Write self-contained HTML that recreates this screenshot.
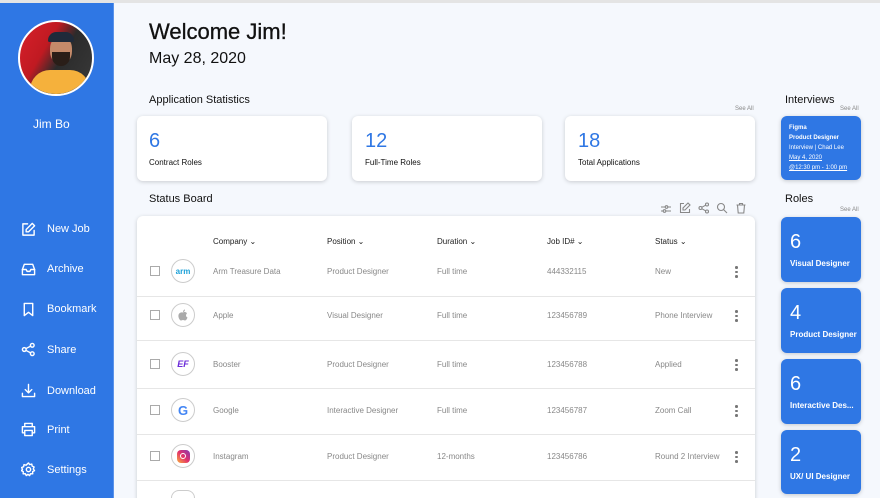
<!DOCTYPE html>
<html style="overflow:hidden;width:880px;height:498px"><head><meta charset="utf-8"><style>
*{margin:0;padding:0;box-sizing:border-box}
body{width:880px;height:498px;overflow:hidden;background:#f5f8fd;font-family:"Liberation Sans",sans-serif;position:relative;color:#111}
.a{position:absolute;white-space:nowrap}
.top{left:0;top:0;width:880px;height:3px;background:#e4e4e4}
.side{left:0;top:3px;width:114px;height:495px;background:#2f77e4;border-right:1px solid #5b93ea}
.nav{color:#fff;font-size:11px;left:47px}
.ic{left:21px;width:15px;height:15px}
.card{background:#fff;border-radius:6px;box-shadow:0 1px 4px rgba(0,0,0,.18)}
.num{color:#2f77e4;font-size:20px}
.lbl{font-size:8px;color:#111}
.h{font-size:11px;color:#111}
.see{font-size:6px;color:#888}
.th{font-size:8px;color:#222;top:237px}
.td{font-size:8px;color:#888}
.chk{width:10px;height:10px;border:1px solid #aaa;left:150px}
.logo{width:24px;height:24px;border:1px solid #ccc;border-radius:50%;left:171px;background:#fff;display:flex;align-items:center;justify-content:center}
.dots{left:735px;width:3px}
.dots i{display:block;width:2.5px;height:2.5px;background:#777;border-radius:50%;margin-bottom:2px}
.line{left:137px;width:618px;height:1px;background:#e6e6e6}
.rc{left:781px;width:80px;height:65px;background:#2f77e4;border-radius:6px;box-shadow:0 1px 4px rgba(0,0,0,.2);color:#fff}
.rc b{position:absolute;left:9px;top:14px;font-size:20px;font-weight:normal}
.rc span{position:absolute;left:9px;top:42px;font-size:8px;font-weight:bold}
svg.s{stroke:#fff;fill:none;stroke-width:1.5;stroke-linecap:round;stroke-linejoin:round}
svg.g{stroke:#888;fill:none;stroke-width:1.1}
</style></head><body>
<div class="a top"></div>
<div class="a side"></div>
<div class="a" style="left:18px;top:20px;width:76px;height:76px;border-radius:50%;border:2px solid #fff;background:linear-gradient(120deg,#d8202a 0%,#c01a22 35%,#2b2b2b 55%,#3a3a3a 100%);overflow:hidden">
<div style="position:absolute;left:30px;top:14px;width:22px;height:28px;border-radius:45%;background:#c48a6a"></div>
<div style="position:absolute;left:28px;top:10px;width:26px;height:10px;border-radius:10px 10px 2px 2px;background:#1f2a3a"></div>
<div style="position:absolute;left:32px;top:30px;width:18px;height:14px;border-radius:0 0 9px 9px;background:#2a1e18"></div>
<div style="position:absolute;left:10px;top:48px;width:60px;height:30px;border-radius:20px 20px 0 0;background:#f5b13c"></div>
</div>
<div class="a" style="left:33px;top:117px;color:#fff;font-size:12px">Jim Bo</div>

<svg class="a ic s" style="top:222px" viewBox="0 0 16 16"><path d="M7 2H2v12h12V9"/><path d="M12 1.5l2.5 2.5L8 10.5H5.5V8z"/></svg>
<div class="a nav" style="top:223px">New Job</div>
<svg class="a ic s" style="top:262px" viewBox="0 0 16 16"><path d="M1.5 8l2-5.5h9l2 5.5v5.5h-13z"/><path d="M1.5 8h4l1 2h3l1-2h4"/></svg>
<div class="a nav" style="top:263px">Archive</div>
<svg class="a ic s" style="top:302px" viewBox="0 0 16 16"><path d="M3.5 1.5h9v13L8 11l-4.5 3.5z"/></svg>
<div class="a nav" style="top:303px">Bookmark</div>
<svg class="a ic s" style="top:342px" viewBox="0 0 16 16"><circle cx="3.5" cy="8" r="2"/><circle cx="12" cy="3.5" r="2"/><circle cx="12" cy="12.5" r="2"/><path d="M5.3 7l5-2.6M5.3 9l5 2.6"/></svg>
<div class="a nav" style="top:344px">Share</div>
<svg class="a ic s" style="top:383px" viewBox="0 0 16 16"><path d="M8 1.5v9M4.5 7L8 10.5 11.5 7M1.5 11v3.5h13V11"/></svg>
<div class="a nav" style="top:385px">Download</div>
<svg class="a ic s" style="top:422px" viewBox="0 0 16 16"><path d="M4 5V1.5h8V5M4 11.5H1.5V5h13v6.5H12"/><path d="M4 9h8v5.5H4z"/></svg>
<div class="a nav" style="top:424px">Print</div>
<svg class="a ic s" style="top:462px" viewBox="0 0 16 16"><circle cx="8" cy="8" r="2.3"/><path d="M8 1l1.3 1.8 2.2-.6.4 2.2 2.1.9-.9 2.1 1.3 1.8-2 1.1.1 2.3-2.3-.1-1 2-1.8-1.3-1.8 1.3-1-2-2.3.1.1-2.3-2-1.1L1.6 8l-.9-2.1 2.1-.9.4-2.2 2.2.6z"/></svg>
<div class="a nav" style="top:464px">Settings</div>

<div class="a" style="left:149px;top:19px;font-size:22px;font-weight:500;-webkit-text-stroke:0.3px #111">Welcome Jim!</div>
<div class="a" style="left:149px;top:50px;font-size:16px">May 28, 2020</div>
<div class="a h" style="left:149px;top:94px">Application Statistics</div>
<div class="a see" style="left:735px;top:106px">See All</div>

<div class="a card" style="left:137px;top:116px;width:190px;height:65px"></div>
<div class="a num" style="left:149px;top:130px">6</div><div class="a lbl" style="left:149px;top:158px">Contract Roles</div>
<div class="a card" style="left:352px;top:116px;width:190px;height:65px"></div>
<div class="a num" style="left:365px;top:130px">12</div><div class="a lbl" style="left:365px;top:158px">Full-Time Roles</div>
<div class="a card" style="left:565px;top:116px;width:190px;height:65px"></div>
<div class="a num" style="left:578px;top:130px">18</div><div class="a lbl" style="left:578px;top:158px">Total Applications</div>

<div class="a h" style="left:149px;top:193px">Status Board</div>
<svg class="a g" style="left:660px;top:203px" width="12" height="12" viewBox="0 0 12 12"><path d="M1 4h4M8 4h3M1 8h2M6 8h5"/><circle cx="6.5" cy="4" r="1.3"/><circle cx="4.5" cy="8" r="1.3"/></svg>
<svg class="a g" style="left:679px;top:202px" width="12" height="12" viewBox="0 0 12 12"><path d="M5 1.5H1.5v9h9V7"/><path d="M9 1l2 2-5 5H4V6z"/></svg>
<svg class="a g" style="left:698px;top:202px" width="12" height="12" viewBox="0 0 12 12"><circle cx="2.5" cy="6" r="1.5"/><circle cx="9" cy="2.5" r="1.5"/><circle cx="9" cy="9.5" r="1.5"/><path d="M4 5.2l3.6-2M4 6.8l3.6 2"/></svg>
<svg class="a g" style="left:716px;top:202px" width="12" height="12" viewBox="0 0 12 12"><circle cx="5" cy="5" r="3.5"/><path d="M7.6 7.6L11 11"/></svg>
<svg class="a g" style="left:735px;top:202px" width="12" height="12" viewBox="0 0 12 12"><path d="M1.5 3h9M4.5 3V1.5h3V3M2.5 3l.7 8h5.6l.7-8"/></svg>

<div class="a card" style="left:137px;top:216px;width:618px;height:290px"></div>
<div class="a th" style="left:213px">Company ⌄</div>
<div class="a th" style="left:327px">Position ⌄</div>
<div class="a th" style="left:437px">Duration ⌄</div>
<div class="a th" style="left:547px">Job ID# ⌄</div>
<div class="a th" style="left:655px">Status ⌄</div>

<div class="a line" style="top:296px"></div>
<div class="a line" style="top:340px"></div>
<div class="a line" style="top:388px"></div>
<div class="a line" style="top:434px"></div>
<div class="a line" style="top:480px"></div>

<div class="a chk" style="top:266px"></div>
<div class="a logo" style="top:259px"><span style="color:#1aa0d8;font-size:8px;font-weight:bold">arm</span></div>
<div class="a td" style="left:213px;top:267px">Arm Treasure Data</div><div class="a td" style="left:327px;top:267px">Product Designer</div><div class="a td" style="left:437px;top:267px">Full time</div><div class="a td" style="left:547px;top:267px">444332115</div><div class="a td" style="left:655px;top:267px">New</div>
<div class="a dots" style="top:266px"><i></i><i></i><i></i></div>

<div class="a chk" style="top:310px"></div>
<div class="a logo" style="top:303px"><svg width="10" height="12" viewBox="0 0 10 12"><path fill="#aaa" d="M5 3.5C6 3 8 2.5 9 4.5 7.5 5.5 7.8 7.8 9.5 8.5 9 10 8 11.5 7 11.5 6 11.5 6 11 5 11S4 11.5 3 11.5C1.5 11.5 0 8 .5 6 1 3.5 3.5 3 5 3.5zM5 3C5 1.5 6 .5 7 .5 7 2 6 3 5 3z"/></svg></div>
<div class="a td" style="left:213px;top:311px">Apple</div><div class="a td" style="left:327px;top:311px">Visual Designer</div><div class="a td" style="left:437px;top:311px">Full time</div><div class="a td" style="left:547px;top:311px">123456789</div><div class="a td" style="left:655px;top:311px">Phone Interview</div>
<div class="a dots" style="top:310px"><i></i><i></i><i></i></div>

<div class="a chk" style="top:359px"></div>
<div class="a logo" style="top:352px"><span style="color:#6b2bd9;font-size:9px;font-weight:bold;font-style:italic">EF</span></div>
<div class="a td" style="left:213px;top:360px">Booster</div><div class="a td" style="left:327px;top:360px">Product Designer</div><div class="a td" style="left:437px;top:360px">Full time</div><div class="a td" style="left:547px;top:360px">123456788</div><div class="a td" style="left:655px;top:360px">Applied</div>
<div class="a dots" style="top:359px"><i></i><i></i><i></i></div>

<div class="a chk" style="top:405px"></div>
<div class="a logo" style="top:398px"><span style="font-size:13px;font-weight:bold;color:#4285f4">G</span></div>
<div class="a td" style="left:213px;top:406px">Google</div><div class="a td" style="left:327px;top:406px">Interactive Designer</div><div class="a td" style="left:437px;top:406px">Full time</div><div class="a td" style="left:547px;top:406px">123456787</div><div class="a td" style="left:655px;top:406px">Zoom Call</div>
<div class="a dots" style="top:405px"><i></i><i></i><i></i></div>

<div class="a chk" style="top:451px"></div>
<div class="a logo" style="top:444px"><div style="width:13px;height:13px;border-radius:4px;background:linear-gradient(45deg,#fbb03b,#e1306c,#833ab4);display:flex;align-items:center;justify-content:center"><div style="width:6px;height:6px;border:1.3px solid #fff;border-radius:50%"></div></div></div>
<div class="a td" style="left:213px;top:452px">Instagram</div><div class="a td" style="left:327px;top:452px">Product Designer</div><div class="a td" style="left:437px;top:452px">12-months</div><div class="a td" style="left:547px;top:452px">123456786</div><div class="a td" style="left:655px;top:452px">Round 2 Interview</div>
<div class="a dots" style="top:451px"><i></i><i></i><i></i></div>
<div class="a logo" style="top:490px;height:8px;border-bottom:none;border-radius:12px 12px 0 0"></div>

<div class="a h" style="left:785px;top:94px">Interviews</div>
<div class="a see" style="left:840px;top:106px">See All</div>
<div class="a" style="left:781px;top:116px;width:80px;height:64px;background:#2f77e4;border-radius:6px;box-shadow:0 1px 4px rgba(0,0,0,.2);color:#fff;font-size:6px;line-height:10px;padding:7px 0 0 8px">
<b>Figma</b><br><b>Product Designer</b><br>Interview | Chad Lee<br><u>May 4, 2020</u><br><u>@12:30 pm - 1:00 pm</u></div>
<div class="a h" style="left:785px;top:193px">Roles</div>
<div class="a see" style="left:840px;top:207px">See All</div>
<div class="a rc" style="top:217px"><b>6</b><span>Visual Designer</span></div>
<div class="a rc" style="top:288px"><b>4</b><span>Product Designer</span></div>
<div class="a rc" style="top:359px"><b>6</b><span>Interactive Des...</span></div>
<div class="a rc" style="top:430px;height:64px"><b>2</b><span>UX/ UI Designer</span></div>
</body></html>
